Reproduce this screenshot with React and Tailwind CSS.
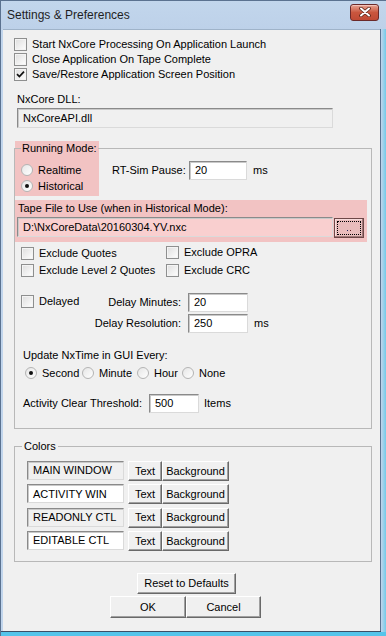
import React from 'react'

const font = "font-['Liberation_Sans',Arial,sans-serif]"

function Check({ label, checked, className = '' }) {
  return (
    <div className={`flex items-center h-[15px] ${className}`}>
      <span className="w-[13px] h-[13px] shrink-0 border border-[#8e8f8f] bg-gradient-to-br from-[#dedede] to-white flex items-center justify-center shadow-[inset_0_0_0_1px_#f4f4f4]">
        {checked && (
          <svg width="9" height="9" viewBox="0 0 9 9">
            <path d="M1 4.2 L3.4 6.6 L8 1.6" stroke="#111" strokeWidth="1.7" fill="none" />
          </svg>
        )}
      </span>
      <span className="ml-[5px] whitespace-nowrap">{label}</span>
    </div>
  )
}

function Radio({ label, checked, className = '' }) {
  return (
    <div className={`flex items-center h-[16px] ${className}`}>
      <span className="w-[12px] h-[12px] shrink-0 rounded-full border border-[#b4b4b4] bg-gradient-to-br from-[#e6e6e6] to-white flex items-center justify-center">
        {checked && <span className="w-[4px] h-[4px] rounded-full bg-[#111]" />}
      </span>
      <span className="ml-[5px] whitespace-nowrap">{label}</span>
    </div>
  )
}

function Box({ value, className = '', bg = 'bg-white' }) {
  return (
    <div
      className={`${bg} border border-t-[#8a8a8a] border-l-[#8a8a8a] border-r-[#dadada] border-b-[#dadada] shadow-[inset_1px_1px_0_#c9c9c9] flex items-center pl-[5px] whitespace-nowrap overflow-hidden ${className}`}
    >
      {value}
    </div>
  )
}

function Btn({ children, className = '' }) {
  return (
    <div
      className={`bg-[#f0f0f0] border border-t-white border-l-white border-r-[#696969] border-b-[#696969] shadow-[inset_-1px_-1px_0_#a0a0a0] flex items-center justify-center whitespace-nowrap ${className}`}
    >
      {children}
    </div>
  )
}

export default function App() {
  return (
    <div className={`w-[386px] h-[636px] bg-[#c1d5ec] border-l border-t border-[#5b7290] ${font} text-[11px] text-black flex flex-col`}>
      {/* title bar */}
      <div className="h-[28px] flex items-center pl-[6px] pr-[7px] bg-gradient-to-b from-[#c2d6ec] to-[#bdd1e9]">
        <span className="text-[12px] text-[#1e1e1e] mt-[-1px]">Settings &amp; Preferences</span>
        <div className="ml-auto mt-[-6px] w-[29px] h-[17px] rounded-[3px] border border-[#6b2a2a] bg-gradient-to-b from-[#e7a393] via-[#c9563e] to-[#c04a35] flex items-center justify-center shadow-[inset_0_1px_0_#f3c3b8]">
          <svg width="12" height="10" viewBox="0 0 12 10">
            <path d="M2 1.5 L10 8.5 M10 1.5 L2 8.5" stroke="#5a2418" strokeWidth="3.6" strokeLinecap="round" />
            <path d="M2 1.5 L10 8.5 M10 1.5 L2 8.5" stroke="#fff" strokeWidth="2" strokeLinecap="round" />
          </svg>
        </div>
      </div>

      <div className="flex flex-1">
        <div className="ml-[2px] w-[377px] h-[604px] bg-[#f0f0f0] border-t border-[#9fb3c9]">
          {/* top checkboxes */}
          <div className="pt-[7px] pl-[11px]">
            <Check label="Start NxCore Processing On Application Launch" />
            <Check label="Close Application On Tape Complete" />
            <Check label="Save/Restore Application Screen Position" checked />
          </div>

          {/* dll */}
          <div className="ml-[14px] mt-[11px] h-[13px] leading-[13px]">NxCore DLL:</div>
          <Box value="NxCoreAPI.dll" bg="bg-[#f0f0f0]" className="ml-[14px] mt-[2px] w-[316px] h-[20px]" />

          {/* running mode group */}
          <div className="ml-[11px] mt-[20px] w-[358px] border border-[#b8b8b8] pb-[15px]">
            <div className="flex -mt-[8px]">
              <div className="w-[84px] bg-[#f2c3c3] pb-[2px]">
                <div className="flex items-start h-[14px]">
                  <span className="w-[6px] h-px bg-[#b8b8b8] mt-[7px]" />
                  <span className="px-px leading-[14px]">Running Mode:</span>
                  <span className="flex-1 h-px bg-[#b8b8b8] mt-[7px]" />
                </div>
                <div className="mt-[7px] pl-[6px]">
                  <Radio label="Realtime" />
                  <Radio label="Historical" checked />
                </div>
              </div>
              <div className="pt-[20px] pl-[13px] flex items-start">
                <div className="flex items-center h-[19px]">
                  <span className="w-[77px]">RT-Sim Pause:</span>
                  <Box value="20" className="w-[58px] h-[19px]" />
                  <span className="ml-[6px]">ms</span>
                </div>
              </div>
            </div>

            {/* tape file */}
            <div className="mt-[4px] w-[352px] h-[42px] bg-[#f2c3c3] pt-[2px] pl-[2px]">
              <div className="h-[13px] leading-[13px] pl-px">Tape File to Use (when in Historical Mode):</div>
              <div className="flex mt-[2px]">
                <Box value="D:\NxCoreData\20160304.YV.nxc" bg="bg-[#f9cfcf]" className="w-[316px] h-[20px]" />
                <div className="ml-px mt-px w-[30px] h-[20px] border border-[#6e4848] bg-[#e9bcbc] p-[2px] shadow-[inset_-1px_-1px_0_#a07a7a,inset_1px_1px_0_#f7dcdc]">
                  <div className="w-full h-full border border-dotted border-black flex items-center justify-center gap-[2px] pt-[5px]">
                    <span className="w-px h-px bg-[#202060]" />
                    <span className="w-px h-px bg-[#602020]" />
                  </div>
                </div>
              </div>
            </div>

            {/* excludes */}
            <div className="mt-[4px] grid grid-cols-[145px_1fr] gap-y-[2px] pl-[6px]">
              <Check label="Exclude Quotes" />
              <Check label="Exclude OPRA" className="-mt-px" />
              <Check label="Exclude Level 2 Quotes" />
              <Check label="Exclude CRC" />
            </div>

            {/* delay */}
            <div className="mt-[15px] flex flex-col gap-[2px]">
              <div className="flex items-center h-[19px]">
                <div className="w-[166px] flex items-center">
                  <Check label="Delayed" className="ml-[6px] -mt-[2px]" />
                  <span className="ml-auto">Delay Minutes:</span>
                </div>
                <Box value="20" className="ml-[7px] w-[60px] h-[19px]" />
              </div>
              <div className="flex items-center h-[19px]">
                <span className="w-[166px] text-right">Delay Resolution:</span>
                <Box value="250" className="ml-[7px] w-[60px] h-[19px]" />
                <span className="ml-[6px]">ms</span>
              </div>
            </div>

            {/* update time */}
            <div className="mt-[16px] ml-[8px] h-[13px] leading-[13px]">Update NxTime in GUI Every:</div>
            <div className="mt-[3px] ml-[10px] flex">
              <Radio label="Second" checked className="w-[57px]" />
              <Radio label="Minute" className="w-[55px]" />
              <Radio label="Hour" className="w-[45px]" />
              <Radio label="None" />
            </div>

            <div className="mt-[13px] ml-[8px] flex items-center h-[19px]">
              <span className="w-[126px]">Activity Clear Threshold:</span>
              <Box value="500" className="w-[50px] h-[19px]" />
              <span className="ml-[5px]">Items</span>
            </div>
          </div>

          {/* colors group */}
          <div className="relative ml-[11px] mt-[17px] w-[358px] border border-[#b8b8b8] pt-[14px] pb-[11px] pl-[12px]">
            <span className="absolute left-[7px] -top-[7px] px-[2px] bg-[#f0f0f0] leading-[13px]">Colors</span>
            <div className="flex flex-col gap-[4.3px]">
              {[
                ['MAIN WINDOW', 'bg-[#f0f0f0]'],
                ['ACTIVITY WIN', 'bg-white'],
                ['READONLY CTL', 'bg-[#f0f0f0]'],
                ['EDITABLE CTL', 'bg-white'],
              ].map(([name, bg]) => (
                <div key={name} className="flex items-start h-[19px]">
                  <Box value={name} bg={bg} className="w-[97px] h-[19px]" />
                  <Btn className="ml-[4px] w-[34px] h-[20px]">Text</Btn>
                  <Btn className="w-[67px] h-[20px]">Background</Btn>
                </div>
              ))}
            </div>
          </div>

          {/* bottom buttons */}
          <Btn className="ml-[134px] mt-[11px] w-[99px] h-[21px]">Reset to Defaults</Btn>
          <div className="flex ml-[107px] mt-[2px]">
            <Btn className="w-[76px] h-[22px]">OK</Btn>
            <Btn className="w-[75px] h-[22px]">Cancel</Btn>
          </div>
        </div>
        <div className="w-px bg-[#5b7290] h-[604px]" />
        <div className="flex-1 bg-gradient-to-r from-[#c1d5ec] to-[#6fcbe9]" />
      </div>
      <div className="h-px bg-[#3c4e66] mr-[5px] -mt-[2px]" />
      <div className="flex-1 bg-[#55c4ea]" />
    </div>
  )
}
